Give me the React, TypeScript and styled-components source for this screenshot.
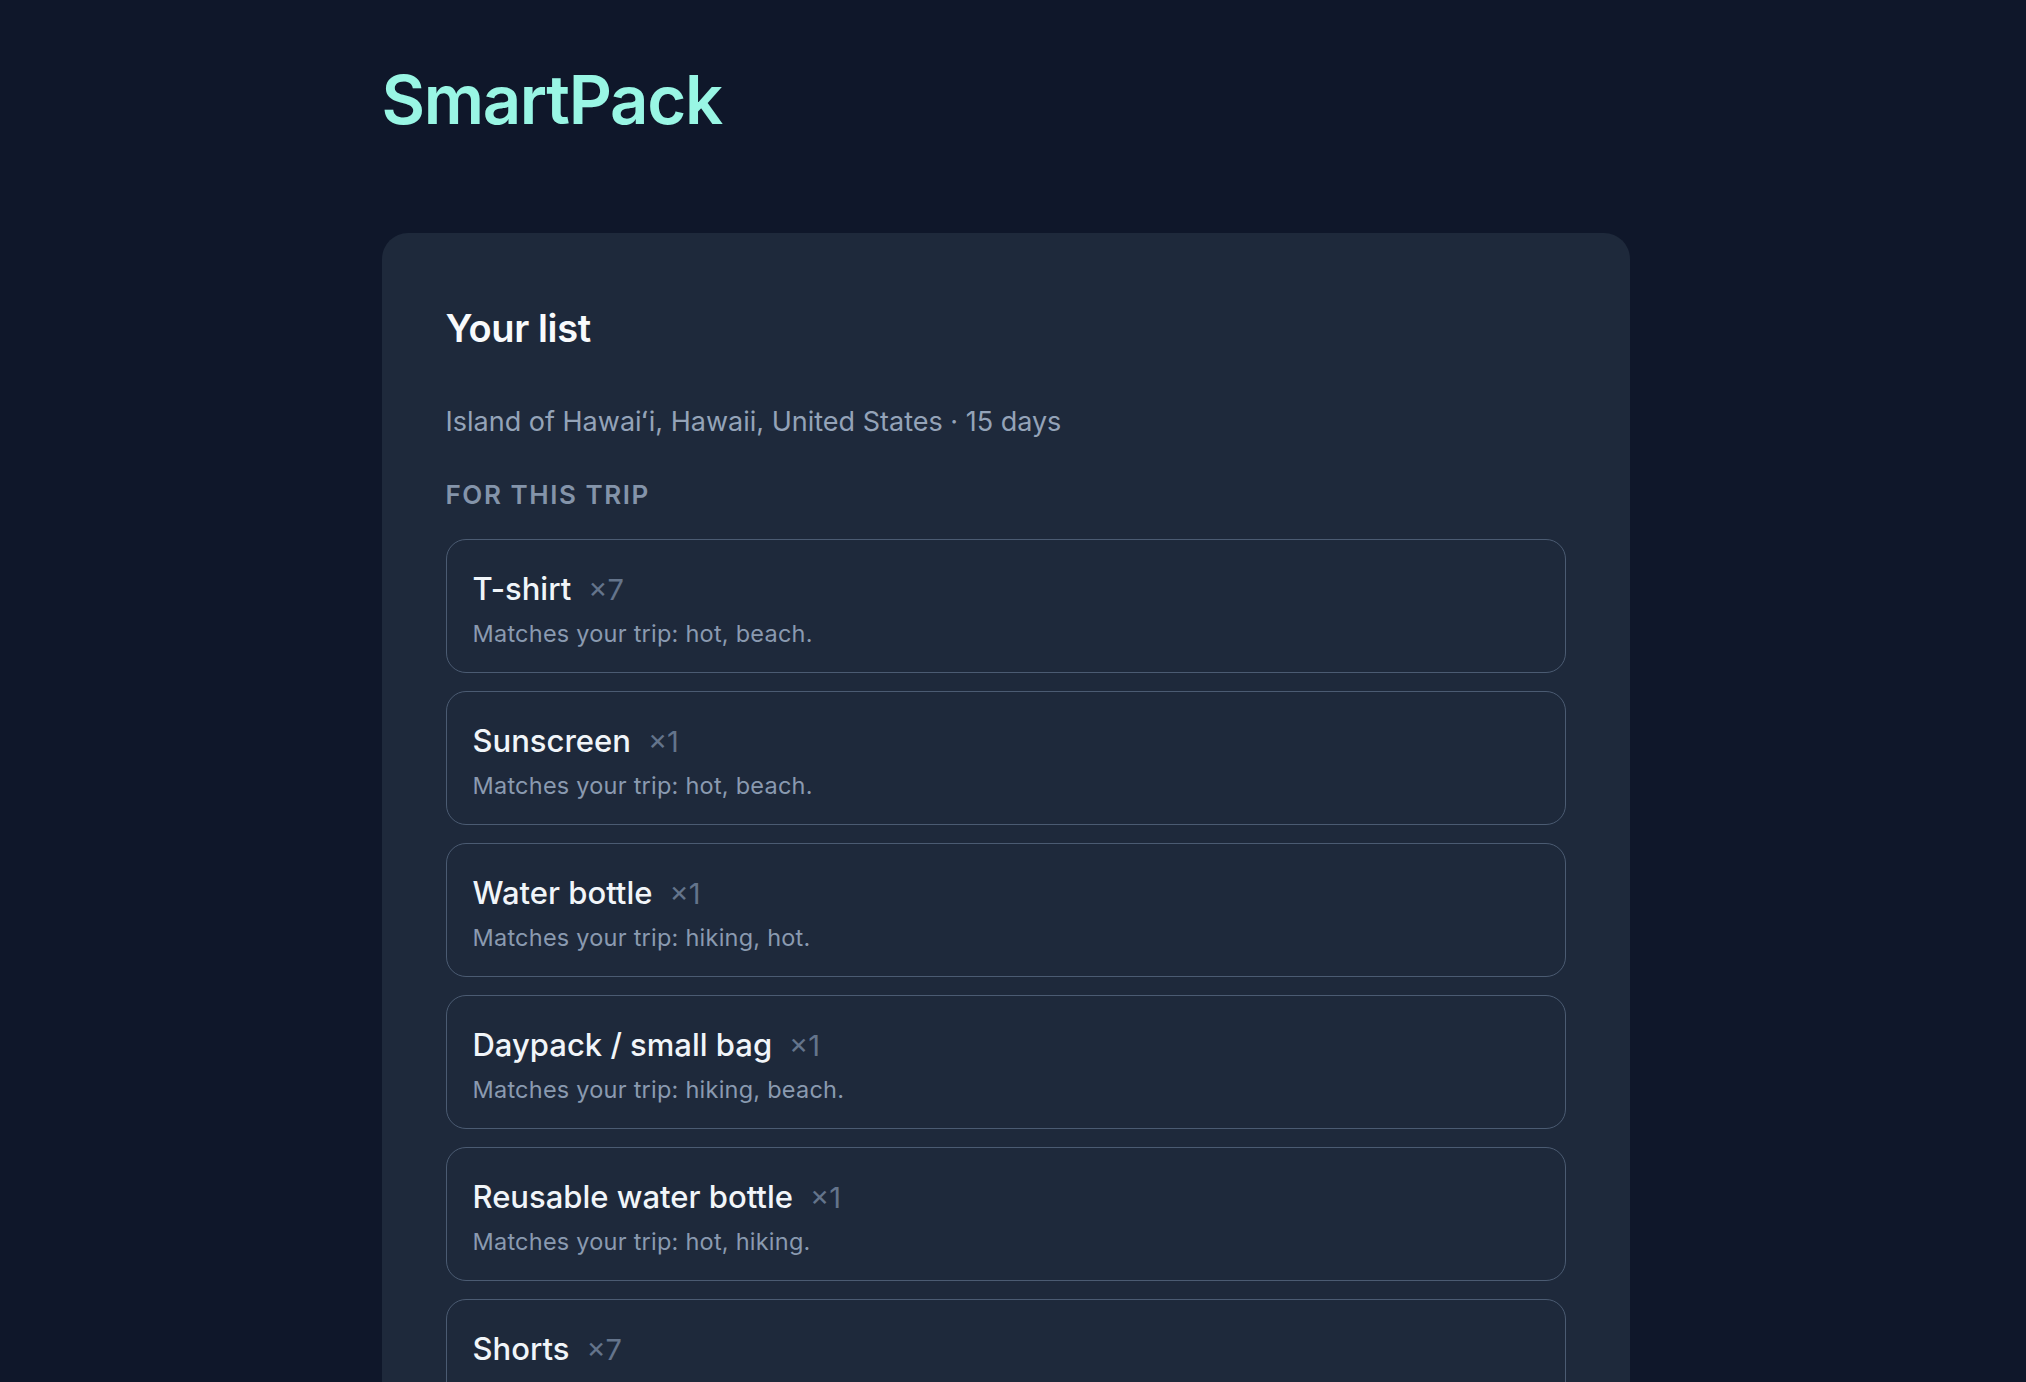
import { FC } from 'react';
import styled, { createGlobalStyle } from 'styled-components';

type PackItem = {
  name: string;
  qty: number;
  reason: string;
};

const items: PackItem[] = [
  { name: 'T-shirt', qty: 7, reason: 'Matches your trip: hot, beach.' },
  { name: 'Sunscreen', qty: 1, reason: 'Matches your trip: hot, beach.' },
  { name: 'Water bottle', qty: 1, reason: 'Matches your trip: hiking, hot.' },
  { name: 'Daypack / small bag', qty: 1, reason: 'Matches your trip: hiking, beach.' },
  { name: 'Reusable water bottle', qty: 1, reason: 'Matches your trip: hot, hiking.' },
  { name: 'Shorts', qty: 7, reason: 'Matches your trip: hot, beach.' },
  { name: 'Sandals', qty: 1, reason: 'Matches your trip: beach.' },
];

const GlobalStyle = createGlobalStyle`
  html, body {
    margin: 0;
    padding: 0;
    background: #0f172a;
  }
  body {
    font-family: 'Inter', 'Noto Sans', sans-serif;
    -webkit-font-smoothing: antialiased;
  }
`;

const ListItem: FC<PackItem> = ({ name, qty, reason }) => (
  <ItemCard>
    <ItemHead>
      <ItemName>{name}</ItemName>
      <Qty>×{qty}</Qty>
    </ItemHead>
    <Reason>{reason}</Reason>
  </ItemCard>
);

export default function App() {
  return (
    <>
      <GlobalStyle />
      <Page>
        <Container>
          <Brand>SmartPack</Brand>
          <Card>
            <Heading>Your list</Heading>
            <TripMeta>Island of Hawaiʻi, Hawaii, United States · 15 days</TripMeta>
            <SectionLabel>For this trip</SectionLabel>
            <List>
              {items.map((it) => (
                <ListItem key={it.name} {...it} />
              ))}
            </List>
          </Card>
        </Container>
      </Page>
    </>
  );
}

const Page = styled.div`
  min-height: 100vh;
  background: #0f172a;
  padding: 60px 15px 80px 0;
`;
const Container = styled.div`
  max-width: 1280px;
  margin: 0 auto;
  padding: 0 16px;
  box-sizing: border-box;
`;
const Brand = styled.h1`
  margin: 0 0 93px;
  font-size: 67px;
  line-height: 1.2;
  font-weight: 600;
  letter-spacing: -0.02em;
  color: #99f6e4;
`;
const Card = styled.section`
  background: #1e293b;
  border-radius: 26px;
  padding: 73px 64px 64px;
`;
const Heading = styled.h2`
  margin: 0;
  font-size: 38px;
  line-height: 1.2;
  font-weight: 600;
  letter-spacing: -0.01em;
  color: #f8fafc;
`;
const TripMeta = styled.p`
  margin: 50px 0 0;
  font-size: 27px;
  line-height: 40px;
  color: #94a3b8;
`;
const SectionLabel = styled.h3`
  margin: 36px 0 0;
  font-size: 26px;
  line-height: 34px;
  font-weight: 600;
  letter-spacing: 0.06em;
  text-transform: uppercase;
  color: #8494aa;
`;
const List = styled.div`
  margin-top: 27px;
  display: flex;
  flex-direction: column;
  gap: 18px;
`;
const ItemCard = styled.div`
  height: 134px;
  box-sizing: border-box;
  border: 1.5px solid #4b5b72;
  border-radius: 20px;
  padding: 29px 26px 0;
`;
const ItemHead = styled.div`
  display: flex;
  align-items: baseline;
  gap: 17px;
`;
const ItemName = styled.span`
  font-size: 31px;
  line-height: 40px;
  font-weight: 500;
  color: #f1f5f9;
`;
const Qty = styled.span`
  font-size: 29px;
  line-height: 40px;
  color: #64748b;
`;
const Reason = styled.div`
  margin-top: 7px;
  font-size: 23.5px;
  line-height: 34px;
  color: #8a9ab0;
  letter-spacing: 0.01em;
`;
